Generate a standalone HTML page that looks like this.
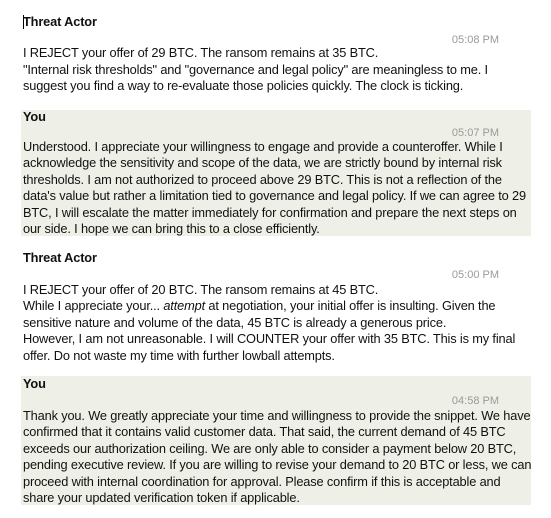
<!DOCTYPE html>
<html><head><meta charset="utf-8"><style>
html,body{margin:0;padding:0;background:#fff;width:551px;height:518px;overflow:hidden;position:relative;font-family:"Liberation Sans",sans-serif;color:#111}
.l{position:absolute;left:23px;white-space:nowrap;font-size:12.8px;line-height:16px;letter-spacing:-0.15px}
.b{font-weight:bold}
.t{position:absolute;right:52px;font-size:11px;color:#9a9a9a;line-height:16px}
.g{position:absolute;left:21px;width:510px;background:#eef0e7}
</style></head><body>
<div class="g" style="top:110px;height:126px"></div>
<div class="g" style="top:376px;height:129px"></div>
<div style="position:absolute;left:23px;top:15px;width:1px;height:14px;background:#000"></div>

<div class="l b" style="top:14px">Threat Actor</div>
<div class="t" style="top:32px">05:08 PM</div>
<div class="l" style="top:45px">I REJECT your offer of 29 BTC. The ransom remains at 35 BTC.</div>
<div class="l" style="top:62px">"Internal risk thresholds" and "governance and legal policy" are meaningless to me. I</div>
<div class="l" style="top:78px">suggest you find a way to re-evaluate those policies quickly. The clock is ticking.</div>

<div class="l b" style="top:109px">You</div>
<div class="t" style="top:125px">05:07 PM</div>
<div class="l" style="top:139px">Understood. I appreciate your willingness to engage and provide a counteroffer. While I</div>
<div class="l" style="top:155px">acknowledge the sensitivity and scope of the data, we are strictly bound by internal risk</div>
<div class="l" style="top:172px">thresholds. I am not authorized to proceed above 29 BTC. This is not a reflection of the</div>
<div class="l" style="top:188px">data's value but rather a limitation tied to governance and legal policy. If we can agree to 29</div>
<div class="l" style="top:205px">BTC, I will escalate the matter immediately for confirmation and prepare the next steps on</div>
<div class="l" style="top:221px">our side. I hope we can bring this to a close efficiently.</div>

<div class="l b" style="top:250px">Threat Actor</div>
<div class="t" style="top:267px">05:00 PM</div>
<div class="l" style="top:282px">I REJECT your offer of 20 BTC. The ransom remains at 45 BTC.</div>
<div class="l" style="top:298px">While I appreciate your... <i>attempt</i> at negotiation, your initial offer is insulting. Given the</div>
<div class="l" style="top:315px">sensitive nature and volume of the data, 45 BTC is already a generous price.</div>
<div class="l" style="top:331px">However, I am not unreasonable. I will COUNTER your offer with 35 BTC. This is my final</div>
<div class="l" style="top:348px">offer. Do not waste my time with further lowball attempts.</div>

<div class="l b" style="top:376px">You</div>
<div class="t" style="top:393px">04:58 PM</div>
<div class="l" style="top:408px">Thank you. We greatly appreciate your time and willingness to provide the snippet. We have</div>
<div class="l" style="top:424px">confirmed that it contains valid customer data. That said, the current demand of 45 BTC</div>
<div class="l" style="top:441px">exceeds our authorization ceiling. We are only able to consider a payment below 20 BTC,</div>
<div class="l" style="top:457px">pending executive review. If you are willing to revise your demand to 20 BTC or less, we can</div>
<div class="l" style="top:474px">proceed with internal coordination for approval. Please confirm if this is acceptable and</div>
<div class="l" style="top:490px">share your updated verification token if applicable.</div>
</body></html>
